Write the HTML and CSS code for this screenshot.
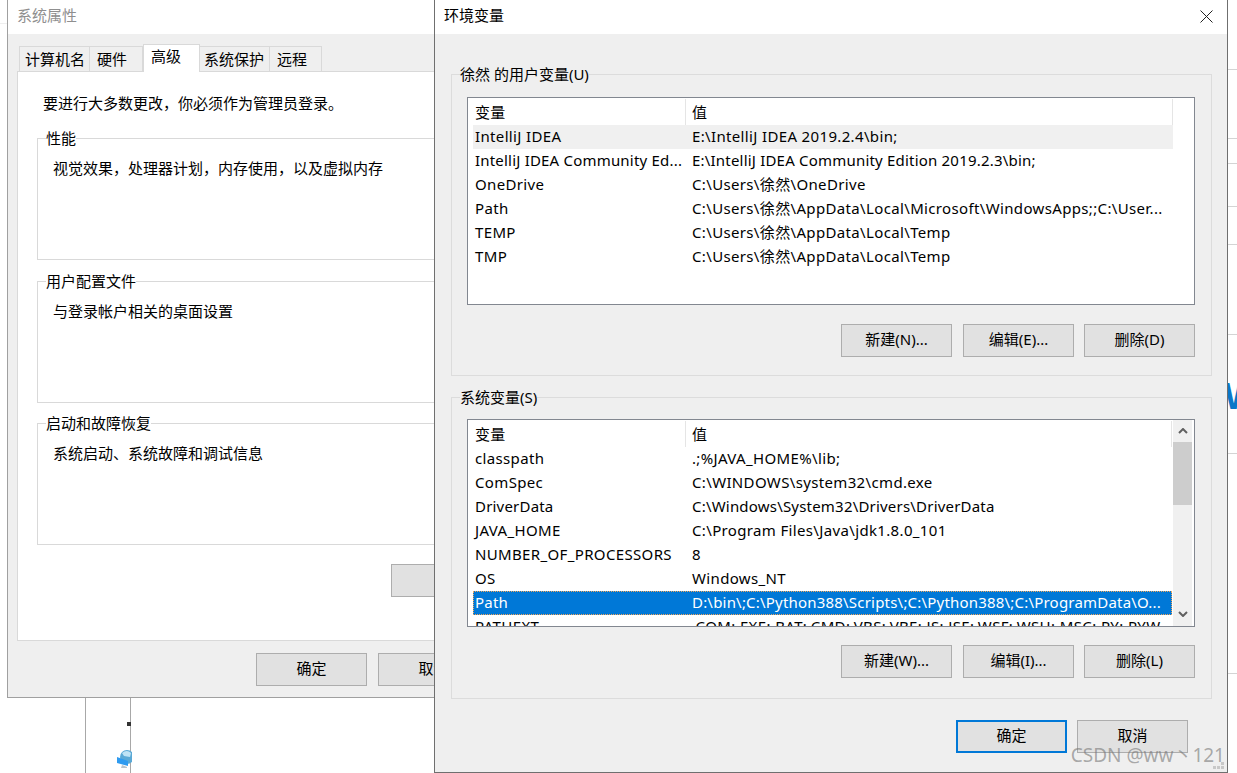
FILE: index.html
```html
<!DOCTYPE html>
<html lang="zh-CN">
<head>
<meta charset="utf-8">
<title>环境变量</title>
<link rel="stylesheet" href="styles.css">
</head>
<body>
<div class="desktop">
  <div class="bg-line h l23"></div>
  <div class="bg-line r y69"></div>
  <div class="bg-line r y138"></div>
  <div class="bg-line r y163"></div>
  <div class="bg-line r y206"></div>
  <div class="bg-line r y244"></div>
  <div class="bg-line r y334"></div>
  <div class="bg-line r y453"></div>
  <div class="bg-line r y673"></div>
  <div class="bg-w">W</div>
  <div class="bg-v v85"></div>
  <div class="bg-v v130"></div>
  <div class="bg-dot"></div>
  <svg class="bg-icon" width="15" height="19" viewBox="0 0 15 19">
    <circle cx="10" cy="7" r="7" fill="#5aa9d6"/>
    <path d="M5 3 Q10 -1 14 3 L13 7 L7 6 Z" fill="#bfe3f5"/>
    <path d="M0 7 L11 11 L11 16 L0 13 Z" fill="#2f9bf0"/>
    <path d="M5 15 L10 17 L10 18 L4 18 Z" fill="#b9c4cc"/>
  </svg>

  <section class="window back">
    <header class="titlebar inactive">系统属性</header>
    <div class="win-body back-body">
      <nav class="tabs">
        <span class="tab t1">计算机名</span>
        <span class="tab t2">硬件</span>
        <span class="tab active t3">高级</span>
        <span class="tab t4">系统保护</span>
        <span class="tab t5">远程</span>
      </nav>
      <div class="panel">
        <p class="notice">要进行大多数更改，你必须作为管理员登录。</p>
        <div class="box first">
          <div class="box-label">性能</div>
          <p class="box-text">视觉效果，处理器计划，内存使用，以及虚拟内存</p>
        </div>
        <div class="box">
          <div class="box-label">用户配置文件</div>
          <p class="box-text">与登录帐户相关的桌面设置</p>
        </div>
        <div class="box third">
          <div class="box-label">启动和故障恢复</div>
          <p class="box-text">系统启动、系统故障和调试信息</p>
        </div>
        <div class="panel-actions"><button class="btn"></button></div>
      </div>
      <div class="footer back-footer">
        <button class="btn">确定</button>
        <button class="btn">取消</button>
      </div>
    </div>
  </section>

  <section class="window front">
    <header class="titlebar">
      <span>环境变量</span>
      <svg class="close" width="13" height="13" viewBox="0 0 13 13"><path d="M0.5 0.5 L12.5 12.5 M12.5 0.5 L0.5 12.5" stroke="#222" stroke-width="1" fill="none"/></svg>
    </header>
    <div class="win-body front-body">
      <div class="group">
        <div class="group-label">徐然 的用户变量(U)</div>
        <div class="list">
          <div class="row head"><span class="c1 sep">变量</span><span class="c2 sep">值</span></div>
          <div class="row hover"><span class="c1">IntelliJ IDEA</span><span class="c2">E:\IntelliJ IDEA 2019.2.4\bin;</span></div>
          <div class="row snug"><span class="c1">IntelliJ IDEA Community Ed...</span><span class="c2">E:\IntelliJ IDEA Community Edition 2019.2.3\bin;</span></div>
          <div class="row"><span class="c1">OneDrive</span><span class="c2">C:\Users\徐然\OneDrive</span></div>
          <div class="row"><span class="c1">Path</span><span class="c2">C:\Users\徐然\AppData\Local\Microsoft\WindowsApps;;C:\User...</span></div>
          <div class="row"><span class="c1">TEMP</span><span class="c2">C:\Users\徐然\AppData\Local\Temp</span></div>
          <div class="row"><span class="c1">TMP</span><span class="c2">C:\Users\徐然\AppData\Local\Temp</span></div>
        </div>
        <div class="actions">
          <button class="btn">新建(N)...</button>
          <button class="btn">编辑(E)...</button>
          <button class="btn tight">删除(D)</button>
        </div>
      </div>
      <div class="group second">
        <div class="group-label">系统变量(S)</div>
        <div class="list sys">
          <div class="rows">
            <div class="row head"><span class="c1 sep">变量</span><span class="c2 sep">值</span></div>
            <div class="row"><span class="c1">classpath</span><span class="c2">.;%JAVA_HOME%\lib;</span></div>
            <div class="row"><span class="c1">ComSpec</span><span class="c2">C:\WINDOWS\system32\cmd.exe</span></div>
            <div class="row snug"><span class="c1">DriverData</span><span class="c2">C:\Windows\System32\Drivers\DriverData</span></div>
            <div class="row"><span class="c1">JAVA_HOME</span><span class="c2">C:\Program Files\Java\jdk1.8.0_101</span></div>
            <div class="row"><span class="c1">NUMBER_OF_PROCESSORS</span><span class="c2">8</span></div>
            <div class="row"><span class="c1">OS</span><span class="c2">Windows_NT</span></div>
            <div class="row selected snug"><span class="c1">Path</span><span class="c2">D:\bin\;C:\Python388\Scripts\;C:\Python388\;C:\ProgramData\O...</span></div>
            <div class="row"><span class="c1">PATHEXT</span><span class="c2">.COM;.EXE;.BAT;.CMD;.VBS;.VBE;.JS;.JSE;.WSF;.WSH;.MSC;.PY;.PYW</span></div>
          </div>
          <div class="scrollbar">
            <div class="arrow"><svg width="10" height="6" viewBox="0 0 10 6"><path d="M1 5 L5 1 L9 5" stroke="#606060" stroke-width="2" fill="none"/></svg></div>
            <div class="thumb"></div>
            <div class="track"></div>
            <div class="arrow down"><svg width="10" height="6" viewBox="0 0 10 6"><path d="M1 1 L5 5 L9 1" stroke="#606060" stroke-width="2" fill="none"/></svg></div>
          </div>
        </div>
        <div class="actions">
          <button class="btn">新建(W)...</button>
          <button class="btn">编辑(I)...</button>
          <button class="btn tight">删除(L)</button>
        </div>
      </div>
      <div class="footer front-footer">
        <button class="btn default">确定</button>
        <button class="btn">取消</button>
      </div>
    </div>
    <svg class="grip" width="11" height="8" viewBox="0 0 11 8"><path d="M8 0h3v3h-3z M4 4h3v3h-3z M8 4h3v3h-3z M0 4h3v3h-3z" fill="#c8c8c8"/></svg>
  </section>

  <div class="watermark">CSDN @ww丶121</div>
</div>
</body>
</html>
```
FILE: styles.css
```css
* { box-sizing: border-box; }
html, body { margin: 0; padding: 0; background: #fff; }
body {
  font-family: "Noto Sans", "Noto Sans CJK SC", sans-serif;
  font-size: 15px;
  color: #000;
  overflow: hidden;
}
.desktop { position: relative; width: 1237px; height: 773px; overflow: hidden; background: #fff; }

/* fragments of what lies behind the dialogs */
.bg-line { position: absolute; height: 1px; background: #d4d4d4; }
.bg-line.l23 { left: 0; top: 23px; width: 7px; background: #efefef; }
.bg-line.r { left: 1228px; width: 9px; }
.y69 { top: 69px; } .y138 { top: 138px; } .y163 { top: 163px; } .y206 { top: 206px; }
.y244 { top: 244px; } .y334 { top: 334px; } .y453 { top: 453px; } .y673 { top: 673px; }
.bg-w { position: absolute; left: 1224px; top: 377px; font: 700 36px/40px "Liberation Sans", sans-serif; color: #0a77c8; }
.bg-v { position: absolute; top: 697px; width: 1px; height: 76px; background: #a8a8a8; }
.v85 { left: 85px; } .v130 { left: 130px; }
.bg-dot { position: absolute; left: 127px; top: 722px; width: 4px; height: 4px; background: #333; }
.bg-icon { position: absolute; left: 117px; top: 750px; }

/* windows */
.window { position: absolute; top: 0; display: flex; flex-direction: column; background: #efefef; }
.back { left: 7px; width: 520px; height: 698px; border: 1px solid #a0a0a0; border-top: 0; }
.front { left: 434px; width: 794px; height: 773px; border: 1px solid #6f6f6f; border-top: 0; }
.titlebar {
  display: flex; align-items: center; justify-content: space-between;
  flex: none; height: 34px; padding: 0 14px 4px 9px; background: #fff; line-height: 20px;
}
.titlebar.inactive { color: #8f8f8f; }
.close { display: block; margin-top: 3px; }
.win-body { flex: 1; min-height: 0; display: flex; flex-direction: column; }

/* back dialog */
.back-body { padding: 10px 9px 0; }
.tabs { display: flex; align-items: flex-end; height: 27px; padding-left: 2px; position: relative; z-index: 1; }
.tab {
  height: 25px; border: 1px solid #d9d9d9; border-bottom: 0; border-left-width: 0;
  line-height: 24px; background: #efefef; white-space: nowrap;
}
.tab.t1 { width: 71px; padding-left: 5px; border-left-width: 1px; }
.tab.t2 { width: 53px; padding-left: 7px; }
.tab.t3 { width: 57px; padding-left: 7px; }
.tab.t4 { width: 70px; padding-left: 4px; }
.tab.t5 { width: 52px; padding-left: 7px; }
.tab.active { height: 28px; margin-bottom: -1px; background: #fff; border-left-width: 1px; line-height: 23px; }
.panel { height: 570px; background: #fff; border: 1px solid #d9d9d9; padding: 0 0 0 19px; display: flex; flex-direction: column; }
.notice { margin: 21px 0 0 6px; height: 20px; line-height: 20px; }
.box { flex: none; width: 460px; height: 122px; margin-top: 21px; border: 1px solid #d9d9d9; }
.box.first { margin-top: 25px; }
.box.third { margin-top: 20px; }
.box-label { width: fit-content; height: 20px; margin: -11px 0 0 8px; background: #fff; line-height: 20px; }
.box-text { margin: 10px 0 0 15px; height: 20px; line-height: 20px; }
.panel-actions { padding-left: 354px; margin-top: 19px; }
.back-footer { display: flex; justify-content: flex-end; gap: 11px; margin-top: 12px; padding-right: 28px; }

/* buttons */
.btn {
  width: 111px; height: 33px; padding: 0 0 3px; margin: 0;
  background: #e1e1e1; border: 1px solid #adadad; border-radius: 0;
  font: inherit; color: #000; line-height: 20px; white-space: nowrap;
}
.btn.default { border: 2px solid #0078d7; }
.btn.tight { margin-left: -1px; }

/* front dialog */
.front-body { padding: 40px 15px 0 16px; }
.group { flex: none; height: 302px; border: 1px solid #dcdcdc; padding: 0 16px 0 15px; }
.group.second { margin-top: 21px; }
.group-label { width: fit-content; height: 20px; margin: -11px 0 0 -7px; background: #efefef; line-height: 20px; }
.list { height: 208px; margin-top: 13px; background: #fff; border: 1px solid #828790; overflow: hidden; }
.list.sys { display: flex; margin-top: 12px; }
.list.sys + .actions { margin-top: 18px; }
.rows { flex: 1; min-width: 0; }
.row {
  display: flex; height: 24px; margin: 0 21px 0 5px; line-height: 22px;
  white-space: nowrap; font-size: 15px; letter-spacing: 0.35px;
}
.row.snug { letter-spacing: 0.2px; }
.sys .row { margin-right: 0; }
.row.head { height: 27px; line-height: 28px; }
.c1 { flex: none; width: 213px; padding-left: 2px; overflow: hidden; }
.c2 { flex: 1; min-width: 0; padding-left: 6px; overflow: hidden; }
.sep { border-right: 1px solid #e5e5e5; height: 26px; margin-top: 1px; line-height: 26px; }
.hover { background: #f0f0f0; }
.selected { background: #0078d7; color: #fff; outline: 1px dotted #f2a65a; outline-offset: -1px; }
.scrollbar { flex: none; width: 21px; display: flex; flex-direction: column; background: #f0f0f0; border-right: 2px solid #fff; margin-left: 1px; }
.arrow { flex: none; height: 22px; display: flex; align-items: center; justify-content: center; }
.arrow.down { height: 24px; }
.thumb { flex: none; height: 63px; background: #cdcdcd; }
.track { flex: 1; }
.actions { display: flex; justify-content: flex-end; gap: 11px; margin-top: 19px; }
.front-footer { display: flex; justify-content: flex-end; gap: 10px; margin-top: 21px; padding-right: 24px; }
.grip { position: absolute; right: 3px; bottom: 2px; }

.watermark {
  position: absolute; right: 12px; top: 743px; line-height: 24px; font-size: 19px;
  color: rgba(120, 120, 120, 0.62); white-space: nowrap;
}
```
